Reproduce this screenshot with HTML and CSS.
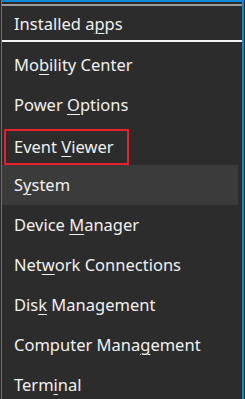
FILE: index.html
```html
<!DOCTYPE html>
<html lang="en">
<head>
    <meta charset="UTF-8">
    <meta name="viewport" content="width=device-width, initial-scale=1.0">
    <title>Quick Link Menu</title>
    <link rel="stylesheet" href="styles.css">
</head>
<body>
    <div class="menu">
        <div class="top-line"></div>
        <ul class="items">
            <li class="first">Installed a<u>p</u>ps</li>
            <li class="sep"></li>
            <li>Mo<u>b</u>ility Center</li>
            <li>Power <u>O</u>ptions</li>
            <li><span class="marked">Event <u>V</u>iewer</span></li>
            <li class="hover">S<u>y</u>stem</li>
            <li>Device <u>M</u>anager</li>
            <li>Net<u>w</u>ork Connections</li>
            <li>Dis<u>k</u> Management</li>
            <li>Computer Mana<u>g</u>ement</li>
            <li>Term<u>i</u>nal</li>
        </ul>
    </div>
</body>
</html>
```

FILE: styles.css
```css
html, body {
    margin: 0;
    padding: 0;
    height: 100%;
    overflow: hidden;
    background-color: #2c2c2c;
}
body {
    font-family: "Noto Sans", "Open Sans", sans-serif;
    font-size: 16.5px;
    color: #f0f0f0;
}
.menu {
    margin-left: 1px;
    width: 240px;
    height: 397px;
    overflow: hidden;
    border: 2px solid #0f8ad8;
    border-bottom: none;
    border-left-width: 1px;
    background: #2c2c2c;
}
.top-line {
    height: 2px;
    margin-top: 2px;
    background: #9c9c9c;
}
.items {
    list-style: none;
    margin: 0;
    padding: 0;
}
.items li {
    height: 40px;
    line-height: 40px;
    padding-left: 12px;
    margin-right: 4px;
    white-space: nowrap;
}
.items li.first {
    height: 32px;
    line-height: 32px;
    padding-top: 2px;
}
.items li.sep {
    height: 2px;
    margin: 0 0 3px 0;
    padding: 0;
    background: #f4f4f4;
}
.items li.hover {
    background: #3b3b3b;
}
.items u {
    text-decoration-thickness: 1px;
    text-underline-offset: 3px;
}
.marked {
    display: inline-block;
    line-height: 32px;
    border: 2px solid #e8202a;
    padding: 0 13px 0 8px;
    margin-left: -10px;
    vertical-align: middle;
}
```
